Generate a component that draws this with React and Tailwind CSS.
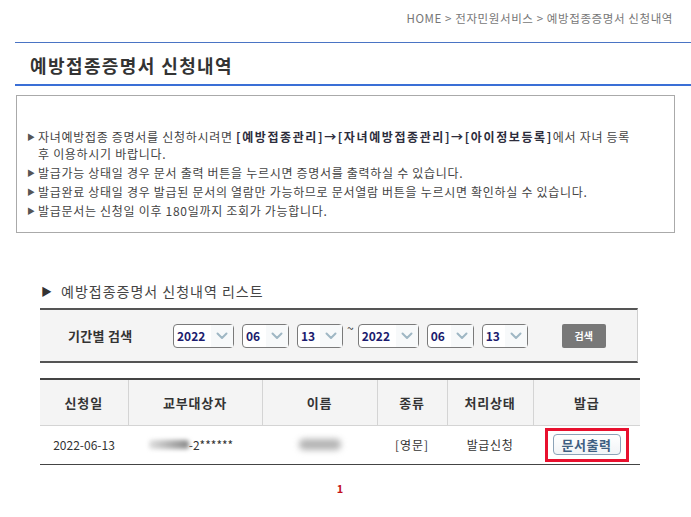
import React from 'react';

const Chevron = () => (
  <svg width="12" height="8" viewBox="0 0 12 8" fill="none">
    <path d="M1.5 1.5 L6 6 L10.5 1.5" stroke="#9fb7c4" strokeWidth="2" strokeLinecap="round" strokeLinejoin="round" />
  </svg>
);

const DateSelect = ({ value, width }) => (
  <div className={`flex h-[24px] items-center rounded-[4px] border border-[#7a7a7a] bg-white ${width}`}>
    <span className="flex-1 pl-[3px] text-[12px] font-bold text-[#1c1c6e]">{value}</span>
    <span className="flex h-full w-[22px] items-center justify-center bg-[#f7f9fa]">
      <Chevron />
    </span>
  </div>
);

const notices = [
  <>
    자녀예방접종 증명서를 신청하시려면 <b className="tracking-[1.6px] text-[#2d2d3c]">[예방접종관리]→[자녀예방접종관리]→[아이정보등록]</b>에서 자녀 등록
    <br />후 이용하시기 바랍니다.
  </>,
  '발급가능 상태일 경우 문서 출력 버튼을 누르시면 증명서를 출력하실 수 있습니다.',
  '발급완료 상태일 경우 발급된 문서의 열람만 가능하므로 문서열람 버튼을 누르시면 확인하실 수 있습니다.',
  '발급문서는 신청일 이후 180일까지 조회가 가능합니다.',
];

const App = () => {
  return (
    <div className="h-[517px] w-[691px] bg-white font-['Noto_Sans_CJK_KR',sans-serif] text-[#333]">
      {/* breadcrumb */}
      <div className="flex h-[42px] justify-end pr-[18px] pt-[11px] text-[11.5px] leading-[14px] tracking-[0.6px] text-[#777]">
        HOME &gt; 전자민원서비스 &gt; 예방접종증명서 신청내역
      </div>

      {/* title */}
      <div className="ml-[15px] flex h-[44px] items-center border-t border-b-2 border-t-[#4a74c4] border-b-[#3a6fd6] pl-[15px] pt-[2px]">
        <h1 className="text-[18px] font-bold leading-[22px] tracking-[1.4px] text-[#333]">예방접종증명서 신청내역</h1>
      </div>

      {/* notice box */}
      <div className="ml-[16px] mt-[9px] w-[659px] border border-[#aaaaaa] pb-[13px] pl-[10px] pt-[32px]">
        <ul className="flex flex-col gap-[2px]">
          {notices.map((n, i) => (
            <li key={i} className="flex text-[12px] leading-[17px] tracking-[0.7px] text-[#444]">
              <span className="w-[11px] shrink-0 text-[8px] text-[#555]">▶</span>
              <span>{n}</span>
            </li>
          ))}
        </ul>
      </div>

      {/* list title */}
      <div className="ml-[41px] mt-[49px] flex items-center gap-[8px] text-[14px] leading-[18px] tracking-[1px] text-[#444]">
        <span className="text-[11px] text-[#333]">▶</span>
        <span>예방접종증명서 신청내역 리스트</span>
      </div>

      {/* search box */}
      <div className="ml-[40px] mt-[8px] flex h-[55px] w-[598px] items-center border-y-2 border-r border-y-[#555] border-r-[#cfcfcf] bg-[#f4f4f4] pl-[28px]">
        <span className="w-[105px] text-[13px] font-bold tracking-[0.3px] text-[#333]">기간별 검색</span>
        <div className="flex items-center gap-[8px]">
          <DateSelect value="2022" width="w-[61px]" />
          <DateSelect value="06" width="w-[47px]" />
          <DateSelect value="13" width="w-[46px]" />
        </div>
        <span className="mx-[4px] self-start pt-[11px] text-[12px] leading-[14px]">~</span>
        <div className="flex items-center gap-[8px]">
          <DateSelect value="2022" width="w-[61px]" />
          <DateSelect value="06" width="w-[47px]" />
          <DateSelect value="13" width="w-[46px]" />
        </div>
        <button className="ml-[34px] h-[24px] w-[44px] rounded-[2px] bg-[#787878] text-[10px] font-bold text-white">
          검색
        </button>
      </div>

      {/* table */}
      <table className="ml-[40px] mt-[15px] w-[600px] border-collapse text-[12px]">
        <thead>
          <tr className="h-[46px] border-t-2 border-[#444] bg-[#f4f4f4] text-[13px] font-bold tracking-[0.8px] text-[#333]">
            <th className="w-[88px] border-r border-[#d4d4d4]">신청일</th>
            <th className="w-[134px] border-r border-[#d4d4d4]">교부대상자</th>
            <th className="w-[115px] border-r border-[#d4d4d4]">이름</th>
            <th className="w-[70px] border-r border-[#d4d4d4]">종류</th>
            <th className="w-[86px] border-r border-[#d4d4d4]">처리상태</th>
            <th className="w-[107px]">발급</th>
          </tr>
        </thead>
        <tbody>
          <tr className="h-[39px] border-y border-t-[#d4d4d4] border-b-[#444] text-[#333]">
            <td className="text-center">2022-06-13</td>
            <td>
              <div className="flex items-center justify-center pr-[8px]">
                <span className="h-[9px] w-[40px] rounded-[3px] bg-gradient-to-r from-[#e0e0e0] to-[#8a8a8a] blur-[2px]" />
                <span className="text-[12px] leading-[14px]">-2******</span>
              </div>
            </td>
            <td>
              <div className="flex justify-center">
                <span className="h-[11px] w-[42px] rounded-[5px] bg-[#b4b4b4] blur-[3px]" />
              </div>
            </td>
            <td className="text-center tracking-[1px]">[영문]</td>
            <td className="text-center tracking-[0.6px]">발급신청</td>
            <td>
              <div className="flex justify-center">
                <div className="flex h-[34px] w-[84px] items-center justify-center border-[3px] border-[#e8102e]">
                  <button className="h-[21px] w-[68px] rounded-[4px] border border-[#8ca3b8] bg-gradient-to-b from-white to-[#f1f4f7] text-[13px] font-bold leading-[18px] tracking-[0.5px] text-[#3f5f82]">
                    문서출력
                  </button>
                </div>
              </div>
            </td>
          </tr>
        </tbody>
      </table>

      {/* pagination */}
      <div className="ml-[40px] mt-[16px] flex w-[600px] justify-center text-[11px] font-bold leading-[14px] text-[#c4121c]">
        1
      </div>
    </div>
  );
};

export default App;
